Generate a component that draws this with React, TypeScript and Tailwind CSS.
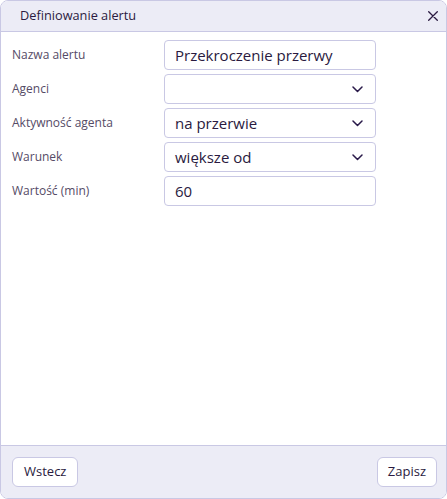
import React from 'react';

const font = { fontFamily: '"Open Sans", "DejaVu Sans", sans-serif' };

const Chevron = () => (
  <svg width="11" height="7" viewBox="0 0 11 7" fill="none" className="shrink-0">
    <path d="M1 1 L5.5 5.5 L10 1" stroke="#2a1a4a" strokeWidth="1.5" strokeLinecap="round" strokeLinejoin="round" />
  </svg>
);

interface FieldProps {
  label: string;
  value: string;
  select?: boolean;
}

const Field: React.FC<FieldProps> = ({ label, value, select }) => (
  <div className="flex items-center h-[30px]">
    <div className="w-[152px] text-[12px] text-[#554b66]">{label}</div>
    <div className="w-[212px] h-[30px] flex items-center justify-between rounded-[4px] border border-[#c9c8e4] bg-white pl-[10px] pr-[12px]">
      <span className="text-[15px] text-[#2a1a40]">{value}</span>
      {select && <Chevron />}
    </div>
  </div>
);

const App: React.FC = () => {
  return (
    <div className="w-[447px] h-[499px] bg-white" style={font}>
      <div className="w-full h-full flex flex-col rounded-[8px] border border-[#c9c8e4] overflow-hidden">
        <div className="h-[31px] shrink-0 flex items-center justify-between bg-[#ececf6] border-b border-[#c9c8e4] pl-[19px] pr-[8px]">
          <span className="text-[12.75px] font-medium text-[#2a1a40]">Definiowanie alertu</span>
          <svg width="10" height="10" viewBox="0 0 10 10" fill="none">
            <path d="M0.7 0.7 L9.3 9.3 M9.3 0.7 L0.7 9.3" stroke="#2a1a40" strokeWidth="1.3" strokeLinecap="round" />
          </svg>
        </div>
        <div className="flex-1 flex flex-col gap-[4px] pt-[8px] pl-[11px]">
          <Field label="Nazwa alertu" value="Przekroczenie przerwy" />
          <Field label="Agenci" value="" select />
          <Field label="Aktywność agenta" value="na przerwie" select />
          <Field label="Warunek" value="większe od" select />
          <Field label="Wartość (min)" value="60" />
        </div>
        <div className="h-[53px] shrink-0 flex items-center justify-between bg-[#ececf6] border-t border-[#c9c8e4] pl-[11px] pr-[9px]">
          <button className="h-[30px] px-[11px] rounded-[6px] border border-[#c9c8e4] bg-white text-[13px] font-medium text-[#2a1a40]">Wstecz</button>
          <button className="h-[30px] px-[10px] rounded-[6px] border border-[#c9c8e4] bg-white text-[13px] font-medium text-[#2a1a40]">Zapisz</button>
        </div>
      </div>
    </div>
  );
};

export default App;
